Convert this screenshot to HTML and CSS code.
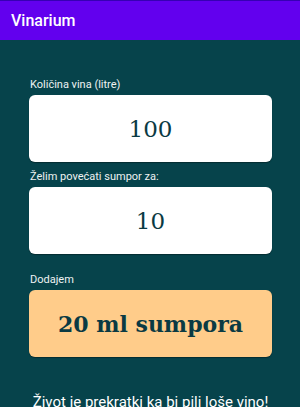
FILE: index.html
```html
<!DOCTYPE html>
<html lang="hr">
<head>
  <meta charset="UTF-8" />
  <meta name="viewport" content="width=device-width, initial-scale=1.0"/>
  <title>Vinarium</title>
  <link rel="stylesheet" href="styles.css">
</head>
<body>
  <header class="appbar">
    <h1>Vinarium</h1>
  </header>

  <main class="content">
    <label class="field-label">Količina vina (litre)</label>
    <div class="card">100</div>

    <label class="field-label">Želim povećati sumpor za:</label>
    <div class="card">10</div>

    <label class="field-label result-label">Dodajem</label>
    <div class="card result">20 ml sumpora</div>

    <p class="motto">Život je prekratki ka bi pili loše vino!</p>
  </main>
</body>
</html>
```

FILE: styles.css
```css
body {
  margin: 0;
  padding: 0;
  background: #06434b;
  font-family: Roboto, "Noto Sans", sans-serif;
  overflow: hidden;
}
.appbar {
  background: #6200ee;
  border-top: 1px solid #3700b3;
  height: 39px;
  display: flex;
  align-items: center;
  padding: 0 11px;
}
.appbar h1 {
  margin: 0;
  color: white;
  font-size: 16px;
  font-weight: 500;
}
.content {
  padding: 38px 28px 0 29px;
  display: flex;
  flex-direction: column;
}
.field-label {
  color: #eef2f2;
  font-size: 11px;
  margin: 0 0 4px 1px;
  line-height: 13px;
}
.card {
  background: white;
  border-radius: 6px;
  height: 67px;
  display: flex;
  align-items: center;
  justify-content: center;
  font-family: "DejaVu Serif", serif;
  font-size: 23px;
  color: #0a3a43;
  margin-bottom: 8px;
  box-shadow: 0 1px 1px rgba(0, 0, 0, 0.35);
}
.result-label {
  margin-top: 11px;
}
.result {
  background: #ffcc8a;
  font-weight: bold;
  font-size: 22px;
}
.motto {
  margin: 27px 0 0;
  text-align: center;
  color: white;
  font-size: 15px;
  line-height: 20px;
  white-space: nowrap;
}
```
